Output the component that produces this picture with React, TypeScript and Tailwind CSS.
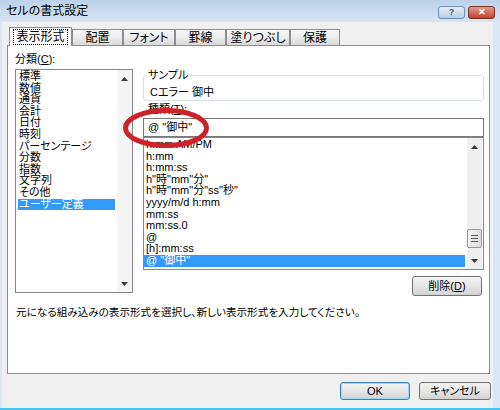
import React from 'react';

const tabs = [
  { label: '表示形式', w: 'w-[63px]', active: true },
  { label: '配置', w: 'w-[51px]', active: false },
  { label: 'フォント', w: 'w-[52px]', active: false },
  { label: '罫線', w: 'w-[51px]', active: false },
  { label: '塗りつぶし', w: 'w-[64px]', active: false },
  { label: '保護', w: 'w-[50px]', active: false },
];

const categories = [
  '標準',
  '数値',
  '通貨',
  '会計',
  '日付',
  '時刻',
  'パーセンテージ',
  '分数',
  '指数',
  '文字列',
  'その他',
  'ユーザー定義',
];

const formats = [
  'h:mm AM/PM',
  'h:mm',
  'h:mm:ss',
  'h"時"mm"分"',
  'h"時"mm"分"ss"秒"',
  'yyyy/m/d h:mm',
  'mm:ss',
  'mm:ss.0',
  '@',
  '[h]:mm:ss',
  '@ "御中"',
];

const ArrowUp = () => (
  <svg width="7" height="4" viewBox="0 0 7 4">
    <path d="M0 4 L3.5 0 L7 4 Z" fill="#3a3a3a" />
  </svg>
);

const ArrowDown = () => (
  <svg width="7" height="4" viewBox="0 0 7 4">
    <path d="M0 0 L7 0 L3.5 4 Z" fill="#3a3a3a" />
  </svg>
);

const Button = ({ children, w, isDefault }: { children: React.ReactNode; w: string; isDefault?: boolean }) => (
  <div
    className={`${w} flex items-center justify-center rounded-[3px] border bg-gradient-to-b from-[#f4f4f4] via-[#e6e6e6] to-[#d3d3d3] text-[11px] leading-none text-black ${
      isDefault ? 'border-[#3c7fb1] shadow-[inset_0_0_0_1px_#9fd8f5]' : 'border-[#707070]'
    }`}
  >
    {children}
  </div>
);

export default function App() {
  return (
    <div className="relative flex h-[410px] w-[500px] flex-col overflow-hidden border-b-2 border-[#43c7ec] bg-[#d9e6f4] text-black [font-family:'Liberation_Sans','Noto_Sans_CJK_JP',sans-serif] [font-feature-settings:'palt']">
      {/* title bar */}
      <div className="relative flex h-[22px] shrink-0 items-center bg-gradient-to-b from-[#bcd2ea] to-[#d7e5f4] pl-[6px] text-[12px] leading-none text-black">
        セルの書式設定
        <div className="absolute right-[5px] top-[6px] flex gap-[3px]">
          <div className="flex h-[13px] w-[27px] items-center justify-center rounded-[3px] border border-[#6d8fb5] bg-gradient-to-b from-[#e6eef7] to-[#b8cde4] text-[9px] font-bold leading-none text-[#3d5a7a]">
            ?
          </div>
          <div className="flex h-[13px] w-[27px] items-center justify-center rounded-[3px] border border-[#7a2f24] bg-gradient-to-b from-[#e09a8d] to-[#c3402f] text-[9px] font-bold leading-none text-white">
            ✕
          </div>
        </div>
      </div>

      {/* body */}
      <div className="ml-[2px] mr-[7px] flex flex-1 flex-col bg-[#f0f0f0]">
        {/* tabs */}
        <div className="ml-[7px] mt-[5px] flex h-[18px] items-end">
          {tabs.map((t) =>
            t.active ? (
              <div
                key={t.label}
                className={`${t.w} relative z-10 mb-[-1px] flex h-[19px] items-center justify-center border border-b-0 border-[#898c95] bg-white text-[12px] leading-none`}
              >
                <span className="border border-dotted border-black px-[2px] py-px">{t.label}</span>
              </div>
            ) : (
              <div
                key={t.label}
                className={`${t.w} flex h-[16px] items-center justify-center border border-b-0 border-[#898c95] bg-gradient-to-b from-[#f7f7f7] via-[#ececec] to-[#d9d9d9] text-[12px] leading-none`}
              >
                {t.label}
              </div>
            )
          )}
        </div>

        {/* panel */}
        <div className="ml-[5px] flex h-[329px] w-[483px] flex-col border border-[#898c95] bg-white pl-[7px] pr-[5px] pt-[6px] text-[11px]">
          <div className="flex gap-[10px]">
            {/* category */}
            <div className="flex w-[118px] flex-col">
              <div className="h-[14px] leading-[14px]">
                分類(<span className="underline">C</span>):
              </div>
              <div className="mt-[3px] flex h-[224px] border border-[#828790] bg-white">
                <div className="flex-1 pl-[2px] pr-[2px] pt-px">
                  {categories.map((c) => (
                    <div
                      key={c}
                      className={`h-[11.6px] whitespace-nowrap pl-px leading-[11.6px] ${
                        c === 'ユーザー定義' ? 'bg-[#3399ff] text-white' : ''
                      }`}
                    >
                      {c}
                    </div>
                  ))}
                </div>
                <div className="flex w-[15px] flex-col justify-between bg-[#f5f5f5]">
                  <div className="flex h-[17px] items-center justify-center">
                    <ArrowUp />
                  </div>
                  <div className="flex h-[17px] items-center justify-center">
                    <ArrowDown />
                  </div>
                </div>
              </div>
            </div>

            {/* right */}
            <div className="flex w-[341px] flex-col">
              <fieldset className="mt-[16px] h-[33px] rounded-[3px] border border-[#d5dfe5] px-[3px] pb-px pt-[3px]">
                <legend className="px-px leading-[14px]">サンプル</legend>
                <div className="pl-[3px] leading-[14px]">Cエラー 御中</div>
              </fieldset>
              <div className="mt-px pl-[5px] leading-[14px]">
                種類(<span className="underline">T</span>):
              </div>
              <div className="mt-[2px] flex h-[19px] items-center border border-[#7a7a7a] bg-white pl-[4px]">
                @ "御中"
              </div>
              <div className="flex h-[133px] border border-[#828790] bg-white">
                <div className="flex-1 pr-[2px] pt-px">
                  {formats.map((f, i) => (
                    <div
                      key={f}
                      className={`h-[11.6px] whitespace-pre pl-[2px] leading-[11.6px] ${
                        i === formats.length - 1 ? 'bg-[#3399ff] text-white' : ''
                      }`}
                    >
                      {f}
                    </div>
                  ))}
                </div>
                <div className="mr-px flex w-[15px] flex-col bg-[#efefef]">
                  <div className="flex h-[17px] items-center justify-center">
                    <ArrowUp />
                  </div>
                  <div className="flex-1 pt-[74px]">
                    <div className="flex h-[19px] flex-col items-center justify-center gap-[2px] rounded-[2px] border border-[#9a9a9a] bg-gradient-to-r from-[#f7f7f7] to-[#dcdcdc]">
                      <div className="h-px w-[7px] bg-[#555]" />
                      <div className="h-px w-[7px] bg-[#555]" />
                      <div className="h-px w-[7px] bg-[#555]" />
                    </div>
                  </div>
                  <div className="flex h-[17px] items-center justify-center">
                    <ArrowDown />
                  </div>
                </div>
              </div>
              <div className="mr-[2px] mt-[6px] flex justify-end">
                <Button w="w-[70px] h-[20px]">
                  削除(<span className="underline">D</span>)
                </Button>
              </div>
            </div>
          </div>
          <div className="mt-[9px] pl-px text-[10.6px] leading-[14px]">
            元になる組み込みの表示形式を選択し、新しい表示形式を入力してください。
          </div>
        </div>

        {/* buttons */}
        <div className="mt-[8px] flex justify-end gap-[9px] pr-[2px]">
          <Button w="w-[70px] h-[18px]" isDefault>
            OK
          </Button>
          <Button w="w-[72px] h-[18px]">キャンセル</Button>
        </div>
      </div>

      {/* annotation */}
      <svg className="pointer-events-none absolute left-[120px] top-[105px]" width="95" height="48" viewBox="0 0 95 48">
        <ellipse cx="46" cy="23" rx="40.5" ry="17.5" fill="none" stroke="#cc2229" strokeWidth="5" />
      </svg>
    </div>
  );
}
